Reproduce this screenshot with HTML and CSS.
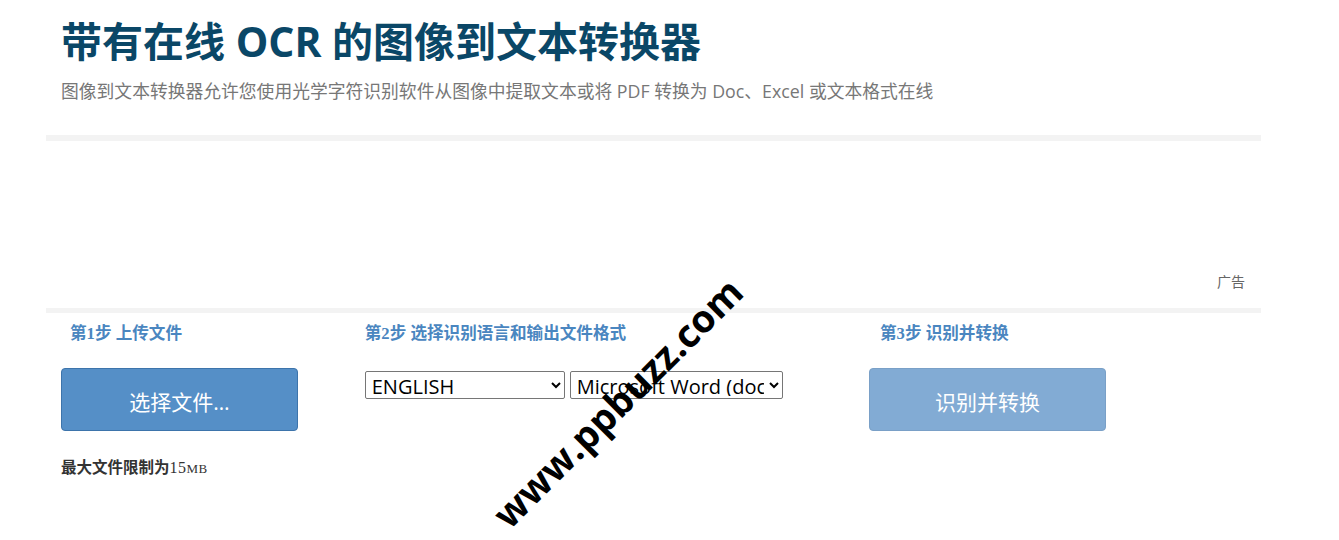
FILE: index.html
```html
<!DOCTYPE html>
<html lang="zh-CN">
<head>
    <meta charset="UTF-8">
    <meta name="viewport" content="width=device-width, initial-scale=1.0">
    <title>带有在线 OCR 的图像到文本转换器</title>
    <link rel="stylesheet" href="styles.css">
</head>
<body>
    <div class="container">
        <div class="page-header">
            <h1 class="page-title">带有在线 OCR 的图像到文本转换器</h1>
            <p class="page-lead">图像到文本转换器允许您使用光学字符识别软件从图像中提取文本或将 PDF 转换为 Doc、Excel 或文本格式在线</p>
        </div>

        <div class="ad-block">
            <span class="ad-label">广告</span>
        </div>

        <div class="steps">
            <div class="step step-upload">
                <div class="step-title indent">第1步 上传文件</div>
                <button type="button" class="btn btn-primary">选择文件…</button>
                <div class="file-limit">最大文件限制为<span class="size">15<small>MB</small></span></div>
            </div>

            <div class="step step-options">
                <div class="step-title">第2步 选择识别语言和输出文件格式</div>
                <div class="select-row">
                    <select class="select-lang">
                        <option>ENGLISH</option>
                    </select>
                    <select class="select-format">
                        <option>Microsoft Word (docx)</option>
                    </select>
                </div>
            </div>

            <div class="step step-convert">
                <div class="step-title indent">第3步 识别并转换</div>
                <button type="button" class="btn btn-disabled">识别并转换</button>
            </div>
        </div>
    </div>

    <div class="watermark">www.ppbuzz.com</div>
</body>
</html>
```

FILE: styles.css
```css
body {
    margin: 0;
    padding: 0;
    background-color: #fff;
    font-family: "Open Sans", "Noto Sans CJK SC", sans-serif;
    color: #333;
}

.container {
    width: 1215px;
    margin-left: 46px;
}

.page-header {
    padding: 15px 15px 0;
}

.page-title {
    margin: 0;
    font-size: 41px;
    line-height: 52px;
    font-weight: 700;
    color: #0a4767;
}

.page-lead {
    margin: 12px 0 0;
    font-size: 17.8px;
    line-height: 24px;
    color: #777;
}

.ad-block {
    margin-top: 32px;
    height: 167px;
    border-top: 6px solid #f3f3f3;
    border-bottom: 5px solid #f3f3f3;
    display: flex;
    justify-content: flex-end;
    align-items: flex-end;
    padding-right: 16px;
}

.ad-label {
    font-size: 14px;
    color: #666;
    margin-bottom: 17px;
}

.steps {
    display: grid;
    grid-template-columns: 3fr 5fr 4fr;
}

.step {
    padding: 10px 15px 0;
}

.step-title {
    font-family: "Liberation Serif", "Noto Sans CJK SC", serif;
    font-size: 16.6px;
    font-weight: 700;
    color: #4a86c0;
    line-height: 22px;
}

.step-title.indent {
    padding-left: 9px;
}

.btn {
    display: block;
    width: 237px;
    height: 63px;
    margin-top: 23px;
    padding-top: 4px;
    border: 1px solid #3d74ab;
    border-radius: 4px;
    font-family: "Open Sans", "Noto Sans CJK SC", sans-serif;
    font-size: 21px;
    color: #fff;
    cursor: pointer;
}

.btn-primary {
    background-color: #558fc7;
}

.btn-disabled {
    background-color: #82abd4;
    border-color: #7aa0c7;
    margin-left: -2px;
}

.file-limit {
    margin-top: 24px;
    font-family: "Noto Sans CJK SC", sans-serif;
    font-size: 15.5px;
    font-weight: 700;
    color: #333;
}

.file-limit .size {
    font-family: "Liberation Serif", serif;
    font-size: 16px;
    font-weight: 400;
    letter-spacing: 0.5px;
}

.file-limit .size small {
    font-size: 13px;
}

.select-row {
    display: flex;
    gap: 5px;
    margin-top: 26px;
}

.select-row select {
    height: 28px;
    font-family: "Open Sans", sans-serif;
    font-size: 20px;
    line-height: 24px;
    color: #000;
    background-color: #fff;
    border: 1px solid #767676;
    border-radius: 2px;
    padding: 0 2px 2px;
}

.select-lang {
    width: 200px;
}

.select-format {
    width: 213px;
}

.watermark {
    position: absolute;
    left: 450px;
    top: 376px;
    transform: rotate(-45deg);
    font-family: "Open Sans", sans-serif;
    font-size: 38px;
    font-weight: 700;
    color: #000;
    white-space: nowrap;
    pointer-events: none;
}
```
